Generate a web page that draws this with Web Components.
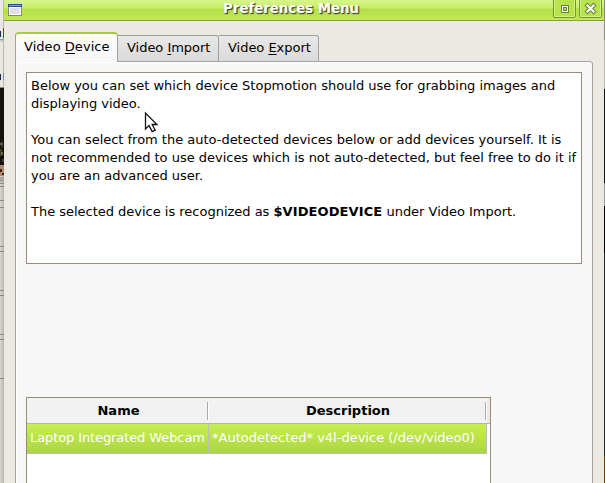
<!DOCTYPE html>
<html lang="en"><head><meta charset="utf-8"><title>Preferences Menu</title>
<style>
html,body{margin:0;height:100%;overflow:hidden}
body{font:13px "DejaVu Sans",sans-serif;color:#000;background:#ddd9d4}
info-box b{letter-spacing:.1px}
</style></head><body>
<prefs-desktop>
 <prefs-window caption="Preferences Menu">
  <prefs-tabs>
   <prefs-tab slot="tab" active style="--w:103px">Video <u>D</u>evice</prefs-tab>
   <prefs-tab slot="tab" style="--w:101px">Video <u>I</u>mport</prefs-tab>
   <prefs-tab slot="tab" style="--w:100px">Video <u>E</u>xport</prefs-tab>
   <info-box>Below you can set which device Stopmotion should use for grabbing images and<br>displaying video.<br><br>You can select from the auto-detected devices below or add devices yourself. It is<br>not recommended to use devices which is not auto-detected, but feel free to do it if<br>you are an advanced user.<br><br>The selected device is recognized as <b>$VIDEODEVICE</b> under Video Import.</info-box>
   <device-table>
    <span slot="h1">Name</span><span slot="h2">Description</span>
    <span slot="c1">Laptop Integrated Webcam</span><span slot="c2">*Autodetected* v4l-device (/dev/video0)</span>
   </device-table>
  </prefs-tabs>
 </prefs-window>
 <mouse-pointer></mouse-pointer>
</prefs-desktop>
<script>
const define=(name,html,setup)=>customElements.define(name,class extends HTMLElement{
 constructor(){super();this.attachShadow({mode:'open'}).innerHTML=html}
 connectedCallback(){if(setup)setup(this,this.shadowRoot)}
});
define('prefs-desktop',`<style>
:host{display:grid;grid-template-columns:4px 600px 1px;width:605px;height:483px;overflow:hidden;position:relative}
svg{display:block}</style>
<svg width="4" height="483" shape-rendering="crispEdges">
<defs><linearGradient id="s"><stop offset="0" stop-color="#dad7d2"/><stop offset="1" stop-color="#b9b6b1"/></linearGradient></defs>
<path fill="url(#s)" d="M0 0h4v483H0z"/><path fill="#e9e7e4" d="M0 0h3v39H0zM0 42h3v45H0z"/><path fill="#999" d="M0 39h4v1H0z"/>
<path fill="#15120e" d="M0 88h4v83H0z"/><path fill="#42402f" d="M1 142h2v5H1zM0 149h2v7H0zM2 159h2v3H2z"/><path fill="#6d6548" d="M0 143h2v2H0zM1 152h2v3H1z"/>
<path fill="#b78667" d="M0 165h4v11H0z"/><path fill="#3a2a20" d="M0 169h2v3H0zM2 173h2v2H2z"/><path fill="#aaa7a3" d="M0 177h4v5H0z"/>
<path fill="#8a8782" d="M0 87h4v1H0zM0 183h4v1H0zM0 186h4v1H0zM0 200h4v1H0zM0 207h4v1H0zM0 246h4v1H0zM0 251h4v1H0zM0 290h4v1H0zM0 295h4v1H0zM0 334h4v1H0zM0 339h4v1H0zM0 378h4v1H0z"/>
<path fill="#1b2a55" d="M0 31h1v6H0zM0 74h1v6H0z"/><path fill="#8b3a16" d="M3 28h1v10H3z"/><path fill="#6f8ca8" d="M3 73h1v7H3z"/></svg>
<slot></slot>
<svg width="1" height="483"><path fill="#8d8d88" d="M0 0h1v40H0z"/><path fill="#bdbab5" d="M0 40h1v49H0z"/><path fill="#111614" d="M0 89h1v94H0z"/><path fill="#99a09c" d="M0 183h1v23H0z"/><path d="M0 206h1v47H0z"/><path fill="#26302b" d="M0 253h1v203H0z"/><path fill="#6c3d15" d="M0 456h1v27H0z"/></svg>`);
define('prefs-window',`<style>
:host{display:flex;flex-direction:column;width:600px;height:483px;background:#ece9e2;grid-column:2;min-width:0}
header{height:20px;border-bottom:1px solid #83a62b;display:grid;grid-template-columns:20px 1fr 24px 24px;gap:2px;padding:0 1px 0 0;background:linear-gradient(#d8f68a 0,#c7ee67 8px,#b4e044 9px,#c0e85a 20px)}
h1{margin:0;font:bold 13.3px/17px "DejaVu Sans",sans-serif;color:#fff;text-shadow:1px 1px 1px #444d26,1px 1px 1px #555d33;text-align:center;padding-left:5px;white-space:nowrap}
svg{display:block}main{padding:11px}</style>
<header><svg width="20" height="20" shape-rendering="crispEdges"><path fill="#858585" d="M4 4h14v12H4z"/><path fill="#285293" d="M4 4h14v3H4z"/><path fill="#739ed8" d="M5 5h12v1H5z"/><path fill="#fff" d="M5 7h12v8H5z"/><path fill="#e0e1dc" d="M6 8h10v6H6z"/></svg>
<h1></h1>
<svg width="24" height="20"><rect x=".5" y="-2.5" width="22" height="20" rx="1.5" fill="#b8e34e" stroke="#74942d"/><path d="M1.5 0v16.5h20V0" fill="none" stroke="#d2ef88"/><path fill="#66823b" shape-rendering="crispEdges" d="M8 5h8v8H8z"/><path fill="#fff" shape-rendering="crispEdges" d="M9 6h6v6h-6z"/><path fill="#66823b" shape-rendering="crispEdges" d="M10 7h4v4h-4z"/><path fill="#b8e34e" shape-rendering="crispEdges" d="M11 8h2v2h-2z"/></svg>
<svg width="24" height="20"><rect x=".5" y="-2.5" width="22" height="20" rx="1.5" fill="#b8e34e" stroke="#74942d"/><path d="M1.5 0v16.5h20V0" fill="none" stroke="#d2ef88"/><path d="M8.5 5.5l6 6m0-6l-6 6" stroke="#66823b" stroke-width="4.2" stroke-linecap="square"/><path d="M8.5 5.5l6 6m0-6l-6 6" stroke="#fff" stroke-width="2.2" stroke-linecap="square"/></svg></header>
<main><slot></slot></main>`,(h,s)=>s.querySelector('h1').textContent=h.getAttribute('caption'));
define('prefs-tabs',`<style>
:host{display:block}
nav{display:flex;align-items:flex-end;height:30px;margin-bottom:-1px;position:relative}
section{box-sizing:border-box;width:578px;height:440px;border:1px solid #a0a1a3;border-radius:0 3px 0 0;background:#f7f7f7;box-shadow:inset 1px 1px #fff;padding:10px;display:flex;flex-direction:column;gap:133px}</style>
<nav><slot name="tab"></slot></nav><section><slot></slot></section>`);
define('prefs-tab',`<style>
:host{box-sizing:border-box;width:var(--w);height:27px;border:1px solid #a0a1a3;border-left-width:0;border-radius:0 3px 0 0;background:linear-gradient(#e8e8e8,#dadada);padding:3px 0 0 9px;line-height:18px;white-space:nowrap;letter-spacing:-.03px}
:host([active]){height:30px;border-left-width:1px;border-top:2px solid #a4cc3e;border-bottom:0;border-radius:4px 4px 0 0;background:linear-gradient(#fcfcfc,#f7f7f7);padding:4px 0 0 8px;letter-spacing:.04px}
::slotted(u){text-decoration-thickness:1px;text-underline-offset:2px;text-decoration-skip-ink:none}</style><slot></slot>`);
define('info-box',`<style>
:host{display:block;flex:none;box-sizing:border-box;width:556px;height:192px;border:1px solid #978b7a;background:#fff;padding:4px;line-height:18px;white-space:nowrap;letter-spacing:-.015px}</style><slot></slot>`);
define('device-table',`<style>
:host{display:block;flex:none;box-sizing:border-box;width:465px;height:100px;border:1px solid #978b7a;background:#fff}
.h,.r{display:grid;grid-template-columns:181px 278px;white-space:nowrap;box-sizing:border-box}
.h{height:26px;background:linear-gradient(90deg,#f2f2f2 460px,#ece9e2 460px);border-bottom:1px solid #b4b4b4;font-weight:bold;text-align:center;padding-top:4px}
.h div{height:18px;line-height:17px;border-right:1px solid #aaa;box-shadow:1px 0 #fff;box-sizing:border-box;padding-left:3px}
.r{width:460px;height:30px;grid-template-columns:182px 278px;background:linear-gradient(#c6ef52,#b9e249 50%,#acd545);border-bottom:1px solid #bdbdbd;color:#fff;line-height:28px}
.r div{border-right:1px solid #bdbdbd;padding-left:3px;box-sizing:border-box}
.r div:first-child{letter-spacing:-.1px}</style>
<div class="h"><div><slot name="h1"></slot></div><div><slot name="h2"></slot></div></div>
<div class="r"><div><slot name="c1"></slot></div><div><slot name="c2"></slot></div></div>`);
define('mouse-pointer',`<style>:host{position:absolute;left:144px;top:111px}svg{display:block}</style>
<svg width="16" height="22"><path d="M1.5 2v16l3.5-3.4 3.2 6 3-1.5-3-5.6h4.7z" fill="#fff" stroke="#111" stroke-width="1.3"/></svg>`);
</script></body></html>
